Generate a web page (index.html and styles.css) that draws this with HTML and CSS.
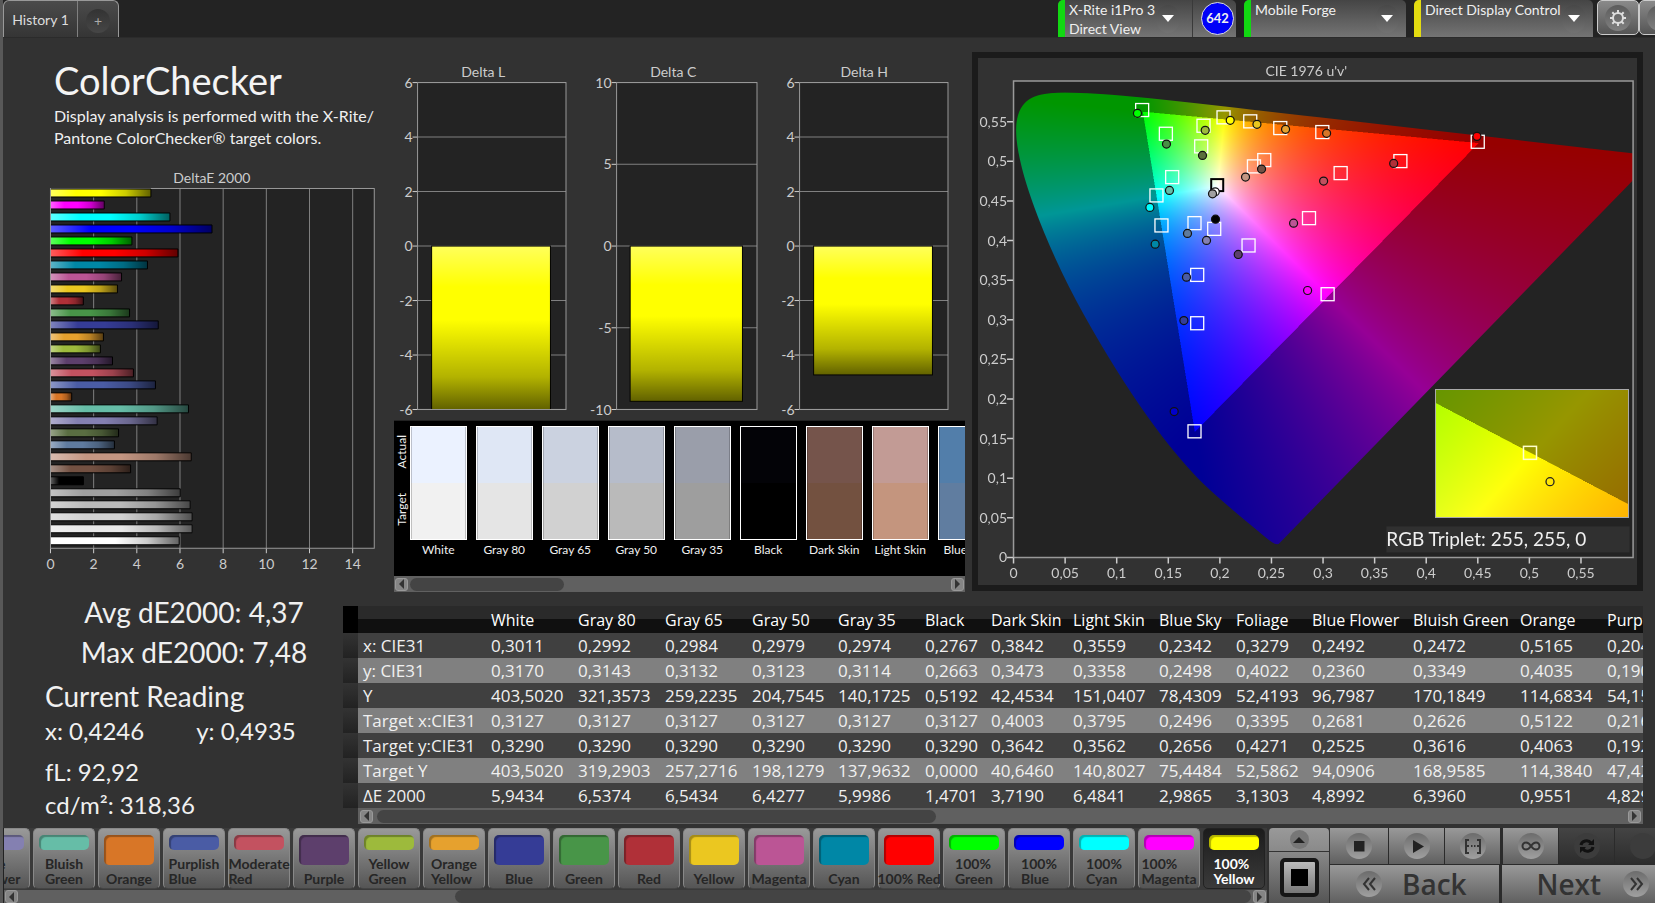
FILE: index.html
```html
<!DOCTYPE html>
<html lang="en">
<head>
<meta charset="utf-8">
<title>ColorChecker</title>
<link rel="stylesheet" href="styles.css">
</head>
<body>
<svg class="defs" aria-hidden="true">
  <defs>
    <linearGradient id="gloss-x" x1="0" x2="1" y1="0" y2="0">
      <stop offset="0" stop-color="#fff" stop-opacity=".36"/>
      <stop offset=".25" stop-color="#fff" stop-opacity="0"/>
      <stop offset=".5" stop-color="#000" stop-opacity="0"/>
      <stop offset=".75" stop-color="#000" stop-opacity=".2"/>
      <stop offset="1" stop-color="#000" stop-opacity=".62"/>
    </linearGradient>
    <linearGradient id="gloss-y" x1="0" x2="0" y1="0" y2="1">
      <stop offset="0" stop-color="#fff" stop-opacity=".36"/>
      <stop offset=".25" stop-color="#fff" stop-opacity="0"/>
      <stop offset=".45" stop-color="#000" stop-opacity="0"/>
      <stop offset=".8" stop-color="#000" stop-opacity=".3"/>
      <stop offset="1" stop-color="#000" stop-opacity=".62"/>
    </linearGradient>
  </defs>
</svg>
<div class="app">
  <header class="topbar">
    <nav class="tabs">
      <button class="tab-name">History 1</button>
      <button class="tab-add" aria-label="Add tab"><span>+</span></button>
    </nav>
    <div class="devices">
      <button class="device meter green"><span class="device-text">X-Rite i1Pro 3<br>Direct View</span><i class="drop"></i><span class="split"></span><b class="badge">642</b></button>
      <button class="device source green"><span class="device-text">Mobile Forge</span><i class="drop"></i></button>
      <button class="device display yellow"><span class="device-text">Direct Display Control</span><i class="drop"></i></button>
      <button class="tool" aria-label="Settings">
        <span class="disc"><svg width="18" height="18" viewBox="0 0 18 18"><circle cx="9" cy="9" r="5" fill="none" stroke="#ddd" stroke-width="2"/><g stroke="#ddd" stroke-width="2"><path d="M9 1v3M9 14v3M1 9h3M14 9h3M3.3 3.3l2.2 2.2M12.500 12.500l2.200 2.200M14.700 3.300l-2.200 2.200M5.500 12.500l-2.200 2.200"/></g></svg></span>
      </button>
      <button class="tool" aria-label="Help"><span class="disc"><svg width="18" height="18" viewBox="0 0 18 18"><path d="M4 9l5-4v8z" fill="#ddd"/></svg></span></button>
    </div>
  </header>

  <main class="work">
    <section class="upper">
      <div class="intro">
        <h1>ColorChecker</h1>
        <p>Display analysis is performed with the X-Rite/<br>Pantone ColorChecker® target colors.</p>
        <svg id="de" class="chart" viewBox="0 0 390 404" role="img" aria-label="DeltaE 2000"></svg>
      </div>
      <div class="middle">
        <div class="deltas" id="deltas"></div>
        <div class="patches">
          <div class="patch-view">
            <div class="patch-side"><span>Actual</span><span>Target</span></div>
            <div class="patch-list" id="patches"></div>
          </div>
          <div class="scroll patch-scroll"><button class="arrow left" aria-label="Scroll left"></button><div class="track"><div class="thumb"></div></div><button class="arrow right" aria-label="Scroll right"></button></div>
        </div>
      </div>
      <div class="cie">
        <canvas id="gamut" width="1238" height="952"></canvas>
        <canvas id="inset" width="384" height="252"></canvas>
        <svg id="cie" class="chart" viewBox="0 0 658 527" role="img" aria-label="CIE 1976 u'v'"></svg>
      </div>
    </section>

    <section class="lower">
      <div class="stats">
        <p class="total">Avg dE2000: 4,37</p>
        <p class="total">Max dE2000: 7,48</p>
        <h2>Current Reading</h2>
        <p class="pair"><span>x: 0,4246</span><span>y: 0,4935</span></p>
        <p class="lum">fL: 92,92</p>
        <p class="lum">cd/m²: 318,36</p>
      </div>
      <div class="data">
        <div class="data-view"><table id="table"></table></div>
        <div class="scroll data-scroll"><button class="arrow left" aria-label="Scroll left"></button><div class="track"><div class="thumb"></div></div><button class="arrow right" aria-label="Scroll right"></button></div>
      </div>
    </section>
  </main>

  <footer class="bottom">
    <div class="strip">
      <div class="strip-list" id="strip"></div>
      <div class="scroll strip-scroll"><button class="arrow left" aria-label="Scroll left"></button><div class="track"><div class="thumb"></div></div><button class="arrow right" aria-label="Scroll right"></button></div>
    </div>
    <div class="window-tools">
      <button class="up" aria-label="Expand"><span class="disc small"><svg width="12" height="8" viewBox="0 0 12 8"><path d="M0 7l6-6 6 6z" fill="#222"/></svg></span></button>
      <button class="frame" aria-label="Pattern window"><span class="frame-box"></span></button>
    </div>
    <div class="controls">
      <div class="control-row">
        <button aria-label="Stop"><span class="disc"><svg width="26" height="26" viewBox="0 0 26 26"><path d="M8 8h10.500v10.500H8z" fill="#222"/></svg></span></button>
        <button aria-label="Play"><span class="disc"><svg width="26" height="26" viewBox="0 0 26 26"><path d="M9 7l11 6.500L9 20z" fill="#222"/></svg></span></button>
        <button aria-label="Range"><span class="disc"><svg width="26" height="26" viewBox="0 0 26 26"><path d="M9 7H6v13h3M17 7h3v13h-3" fill="none" stroke="#333" stroke-width="2"/><path d="M6 13h3M11 13h1.500M14 13h1.500M17 13h3" stroke="#333" stroke-width="2"/></svg></span></button>
        <button class="loop" aria-label="Continuous"><span class="disc"><svg width="26" height="26" viewBox="0 0 26 26"><path d="M13 13c-2-3-3.500-3.500-5-3.500a3.500 3.500 0 0 0 0 7c1.500 0 3-.5 5-3.500s3.500-3.500 5-3.500a3.500 3.500 0 0 1 0 7c-1.500 0-3-.5-5-3.500z" fill="none" stroke="#333" stroke-width="2"/></svg></span></button>
        <button class="off" aria-label="Refresh"><span class="disc"><svg width="26" height="26" viewBox="0 0 26 26"><path d="M7 12c.5-4 7-6 10-2M19 14c-.5 4-7 6-10 2" fill="none" stroke="#111" stroke-width="3"/><path d="M20 6v6h-6zM6 20v-6h6z" fill="#111"/></svg></span></button>
        <button class="off" aria-label="Record"><span class="disc"></span></button>
      </div>
      <div class="control-row steps">
        <button class="back"><span class="disc"><svg width="26" height="26" viewBox="0 0 26 26"><path d="M13 7l-5 6 5 6M19 7l-5 6 5 6" fill="none" stroke="#333" stroke-width="2"/></svg></span>Back</button>
        <button class="next">Next<span class="disc"><svg width="26" height="26" viewBox="0 0 26 26"><path d="M8 7l5 6-5 6M14 7l5 6-5 6" fill="none" stroke="#333" stroke-width="2"/></svg></span></button>
      </div>
    </div>
  </footer>
</div>
<script src="app.js"></script>
</body>
</html>
```
FILE: styles.css
```css
* { box-sizing: border-box; }
body { margin: 0; background: #323232; color: #f0f0f0; font-family: Lato, "Open Sans", sans-serif; overflow: hidden; }
button { font: inherit; color: inherit; border: 0; padding: 0; margin: 0; background: none; }
h1, h2, p { margin: 0; font-weight: 400; }
.defs { position: absolute; width: 0; height: 0; }
.app { min-height: 100vh; display: flex; flex-direction: column; border-left: 3px solid #585858; }

/* top bar */
.topbar { display: flex; justify-content: space-between; height: 38px; background: #232323; border-bottom: 1px solid #2b2b2b; }
.tabs { display: flex; height: 37px; border: 1px solid #999; border-bottom: 0; border-radius: 6px 6px 0 0; background: linear-gradient(#4b4b4b, #353535); }
.tab-name { width: 73px; font-size: 14px; color: #ddd; }
.tab-add { width: 41px; border-left: 1px solid #808080; display: grid; place-items: center; }
.tab-add span { width: 24px; height: 24px; margin-top: 4px; border-radius: 50%; background: linear-gradient(#333, #464646); color: #aaa; font-size: 14px; line-height: 24px; }
.devices { display: flex; height: 37px; margin-right: -26px; }
.device { display: flex; align-items: center; height: 37px; border-radius: 5px 5px 0 0; background: linear-gradient(#454545, #747474); text-align: left; font-size: 14px; line-height: 19px; overflow: hidden; }
.device::before { content: ""; align-self: stretch; width: 7px; margin-right: 4px; background: #12d812; }
.device.yellow::before { background: #e4dc10; }
.device-text { flex: 1; align-self: flex-start; white-space: nowrap; }
.meter { width: 178px; margin-right: 8px; }
.source { width: 162px; margin-right: 8px; }
.display { width: 179px; margin-right: 4px; }
.drop { width: 24px; height: 28px; border-radius: 50%; background: linear-gradient(#484848, #727272); display: grid; place-items: center; margin-right: 7px; }
.meter .drop { margin-right: 12px; }
.drop::after { content: ""; border: 6px solid transparent; border-top: 7px solid #fff; border-bottom: 0; }
.split { width: 1px; height: 37px; background: #3a3a3a; }
.badge { width: 33px; height: 33px; margin: 0 2px 0 8px; border: 1px solid #ddd; border-radius: 50%; background: #0000f8; font-size: 13px; line-height: 31px; text-align: center; font-weight: 700; }
.tool { width: 42px; height: 35px; border: 1px solid #ccc; border-radius: 5px; background: linear-gradient(#8a8a8a, #555); display: grid; place-items: center; }
.disc { width: 26px; height: 26px; border-radius: 50%; display: grid; place-items: center; background: linear-gradient(#6c6c6c, #a0a0a0); }
.tool .disc { background: linear-gradient(#5c5c5c, #808080); }

/* upper area */
.work { flex: 1; padding: 14px 12px 0 1px; display: flex; flex-direction: column; }
.upper { display: grid; grid-template-columns: minmax(0, 390fr) minmax(0, 572fr) minmax(0, 678fr); }
.chart { display: block; width: 100%; overflow: visible; }
.chart text { font-family: Lato, sans-serif; font-size: 14px; fill: #ccc; }
.intro h1 { font-size: 38px; line-height: 44px; margin: 6px 0 0 50px; color: #f4f4f4; }
.intro p { font-size: 16px; line-height: 22px; margin: 3px 0 0 50px; white-space: nowrap; }
.intro .chart { margin-top: 23px; }
.middle { display: flex; flex-direction: column; }
.deltas { display: grid; grid-template-columns: repeat(3, 1fr); height: 368px; }
.patches { background: #000; border-top: 1px solid #222; }
.patch-view { display: flex; height: 155px; overflow: hidden; }
.patch-side { flex: none; width: 16px; padding: 6px 0 0; display: grid; grid-template-rows: 50px 64px; place-items: center; font-size: 12px; }
.patch-side span { writing-mode: vertical-rl; transform: rotate(180deg); }
.patch-list { display: flex; gap: 9px; padding-top: 5px; min-width: 0; overflow: hidden; }
.patch { flex: none; width: 57px; font-size: 12px; text-align: center; white-space: nowrap; }
.patch-pair { height: 114px; border: 1px solid #fff; display: grid; grid-template-rows: 1fr 1fr; }
.patch-pair i { box-shadow: inset 1px 0 rgba(0,0,0,.2), inset -1px 0 rgba(0,0,0,.2); }
.patch-name { display: block; line-height: 20px; }
.cie { display: grid; margin-left: 7px; border: 6px solid #1b1b1b; background: #323232; align-self: start; }
.cie > * { grid-area: 1 / 1; }
#gamut { width: 94.07%; margin: 3.5% 0 0 5.39%; background: #232323; }
#inset { width: 29.2%; margin: 50.46% 0 0 69.45%; outline: 1px solid #aaa; }
#cie .read { font-size: 19px; fill: #f0f0f0; }

/* scroll bars */
.scroll { display: flex; align-items: center; gap: 2px; height: 16px; background: #606060; padding: 0 1px; }
.arrow { width: 13px; height: 13px; border-radius: 3px; background: #858585; border: 1px solid #999; display: grid; place-items: center; }
.arrow::after { content: ""; border: 5px solid transparent; }
.arrow.left::after { border-right-color: #333; border-left: 0; }
.arrow.right::after { border-left-color: #333; border-right: 0; }
.track { flex: 1; height: 13px; }
.thumb { height: 100%; border-radius: 7px; background: #444; }
.patch-scroll .thumb { width: 28.5%; }
.data-scroll { margin-left: 15px; padding: 0 2px; gap: 4px; }
.data-scroll .thumb { width: 44.8%; }
.strip-scroll { height: 13px; }
.strip-scroll .thumb { width: 64.7%; margin-left: 35.3%; }

/* lower area */
.lower { display: grid; grid-template-columns: 339fr 1300fr; margin-top: 14px; }
.stats { padding-left: 41px; font-size: 24px; white-space: nowrap; }
.total { font-size: 28px; line-height: 40px; text-align: center; }
.total:first-child { margin-top: -14px; }
.stats h2 { font-size: 28px; line-height: 32px; margin-top: 8px; }
.pair { display: flex; gap: 52px; line-height: 38px; }
.lum { line-height: 33px; }
.pair + .lum { margin-top: 5px; }
.data { min-width: 0; }
.data-view { overflow: hidden; }
table { table-layout: fixed; border-collapse: collapse; width: 1364px; font-family: "Open Sans", "Noto Sans", sans-serif; font-size: 17px; }
th, td { height: 25px; padding: 0 0 0 5px; line-height: 24px; font-weight: 400; text-align: left; white-space: nowrap; overflow: hidden; }
thead th { height: 27px; font-size: 16px; background: linear-gradient(#2a2a2a 0 50%, #101010 50%); color: #fff; }
thead th:first-child { background: #000; }
tbody tr { background: #404040; }
tbody tr:nth-child(even) { background: #808080; }
tbody td:first-child { background: linear-gradient(#333, #222); }

/* bottom bar */
.bottom { display: flex; height: 75px; background: #323232; }
.strip { flex: 1; min-width: 0; overflow: hidden; background: #3a3a3a; border-left: 1px solid #222; }
.strip-list { display: flex; gap: 3px; margin-left: -36px; height: 62px; }
.swatch { flex: none; width: 62px; height: 61px; padding: 6px 0 0; border-radius: 5px; background: linear-gradient(#999, #555); border: 1px solid #888; border-bottom-color: #444; display: flex; flex-direction: column; align-items: center; justify-content: space-between; color: #262626; font-size: 14px; line-height: 15px; font-weight: 700; text-align: left; white-space: nowrap; }
.swatch i { flex: none; width: 50px; height: 30px; border-radius: 5px; box-shadow: inset 2px 2px 1px rgba(0,0,0,.3); }
.swatch.two i { height: 15px; }
.swatch span { padding-bottom: 2px; }
.swatch.on { background: linear-gradient(#1c1c1c, #3a3a3a); border-color: #222; color: #fff; }
.window-tools { width: 60px; display: grid; grid-template-rows: 23px 1fr; gap: 1px; margin: 0 1px 0 2px; background: #333; }
.window-tools button { display: grid; place-items: center; background: linear-gradient(#999, #8a8a8a); border-radius: 4px 4px 0 0; }
.window-tools .frame { background: linear-gradient(#888, #555); border-radius: 0; }
.disc.small { width: 19px; height: 19px; background: #777; }
.frame-box { width: 39px; height: 39px; border: 4px solid #161616; border-radius: 5px; background: linear-gradient(#bbb, #777); display: grid; place-items: center; }
.frame-box::after { content: ""; width: 17px; height: 17px; background: #000; }
.controls { width: 325px; overflow: hidden; display: flex; flex-direction: column; gap: 1px; background: #2b2b2b; }
.control-row { display: flex; gap: 1px; width: 342px; height: 38px; }
.control-row button { width: 55px; display: grid; place-items: center; background: linear-gradient(#999, #606060); }
.control-row button:first-child { width: 58px; }
.control-row .loop { margin-left: 2px; }
.control-row .off { background: linear-gradient(#444, #2c2c2c); }
.control-row .off .disc { background: #3c3c3c; }
.steps button, .steps button:first-child { width: 170px; display: flex; align-items: center; gap: 20px; font: 600 28px "Open Sans", sans-serif; color: #333; padding-left: 26px; }
.steps .next { margin-left: 2px; padding-left: 34px; gap: 22px; }
```
FILE: app.js
```js
const $ = id => document.getElementById(id);

/* DeltaE 2000 bars, top to bottom: colour and value */
const dE = [
  ['#ffff00', 4.63], ['#ff00ff', 2.47], ['#00ffff', 5.51], ['#0000ff', 7.46], ['#00ff00', 3.75], ['#ff0000', 5.88],
  ['#0087a6', 4.47], ['#bb5595', 3.27], ['#ebc720', 3.08], ['#b03038', 1.5], ['#489548', 3.64], ['#353c96', 4.97],
  ['#e6a12e', 2.43], ['#9dba3c', 2.29], ['#5d3f6c', 2.85], ['#c35260', 3.82], ['#4a5ca5', 4.84], ['#d87627', .96],
  ['#66bda7', 6.37], ['#8480b1', 4.92], ['#5a6e42', 3.13], ['#5f7b9f', 2.94], ['#c49682', 6.5], ['#735142', 3.69],
  ['#000000', 1.5], ['#a0a0a0', 5.99], ['#bababa', 6.45], ['#d2d2d2', 6.54], ['#e8e8e8', 6.54], ['#ffffff', 5.94]];
{
  const X = v => 46.5 + v * 21.6, top = 16.5, bot = 376.5;
  let s = `<text x="208" y="11" text-anchor="middle">DeltaE 2000</text><rect x="${X(0)}" y="${top}" width="${X(15) - X(0)}" height="${bot - top}" fill="#232323"/>`;
  for (let v = 0; v <= 14; v += 2)
    s += `<path d="M${X(v)} ${top}V${bot}" stroke="#808080"/><path d="M${X(v)} ${bot}v5" stroke="#ccc"/><text x="${X(v)}" y="397" text-anchor="middle">${v}</text>`;
  s += `<rect x="${X(0)}" y="${top}" width="${X(15) - X(0)}" height="${bot - top}" fill="none" stroke="#999"/>`;
  dE.forEach(([c, v], i) => {
    const y = 17 + i * 12, w = v * 21.6;
    s += `<rect x="47" y="${y}" width="${w}" height="8" fill="${c}"/><rect x="47" y="${y}" width="${w}" height="8" fill="url(#gloss-x)"/><path d="M47 ${y}h${w}v8h-${w}" fill="none" stroke="#000"/>`;
  });
  $('de').innerHTML = s;
}

/* Delta L / C / H columns */
[['Delta L', 23.5, 171.5, 6, 2, -7, 37.5, 156, 89], ['Delta C', 32.5, 172.500, 10, 5, -9.5, 46, 158, 89], ['Delta H', 24.5, 172.5, 6, 2, -4.73, 38.500, 157, 89]].forEach(([name, l, r, max, step, val, b0, b1, tx]) => {
  const Y = v => 193.5 - v / max * 163;
  let s = `<text x="${tx}" y="25" text-anchor="middle">${name}</text><rect x="${l}" y="30.5" width="${r - l}" height="325" fill="#232323"/>`;
  for (let v = -max; v <= max; v += step)
    s += `<path d="M${l} ${Y(v)}H${r}" stroke="#808080"/><path d="M${l - 5} ${Y(v)}h5" stroke="#ccc"/><text x="${l - 5}" y="${Y(v) + 5}" text-anchor="end">${v}</text>`;
  const h = Math.min(-val / max * 163, 163);
  s += `<rect x="${b0}" y="193.5" width="${b1 - b0}" height="${h}" fill="#ff0"/><rect x="${b0}" y="193.5" width="${b1 - b0}" height="${h}" fill="url(#gloss-y)" stroke="#000"/>`;
  s += `<rect x="${l}" y="30.5" width="${r - l}" height="326" fill="none" stroke="#999"/>`;
  $('deltas').insertAdjacentHTML('beforeend', `<svg class="chart" viewBox="0 0 190 368" role="img" aria-label="${name}">${s}</svg>`);
});

/* actual / target patches */
[['White', '#ebf2ff', '#f1f1f1'], ['Gray 80', '#dfe7f5', '#e5e5e5'], ['Gray 65', '#cbd2e0', '#d1d1d1'], ['Gray 50', '#b6bcca', '#bababa'],
 ['Gray 35', '#9a9eaa', '#9e9e9e'], ['Black', '#030307', '#000'], ['Dark Skin', '#75544b', '#735140'], ['Light Skin', '#c29b95', '#c4957e'],
 ['Blue Sky', '#527eaa', '#607da0']].forEach(([n, a, t]) => {
  $('patches').insertAdjacentHTML('beforeend', `<div class="patch"><div class="patch-pair"><i style="background:${a}"></i><i style="background:${t}"></i></div><span class="patch-name">${n}</span></div>`);
});

/* chromaticity colours, normalised to the strongest channel */
function rgbAt(x, y) {
  const X = x / y, Z = (1 - x - y) / y;
  const r = 3.2406 * X - 1.5372 - .4986 * Z, g = -.9689 * X + 1.8758 + .0415 * Z, b = .0557 * X - .204 + 1.057 * Z;
  const m = Math.max(r, g, b), k = (r < 0 || g < 0 || b < 0) ? .59 : 1;
  return [r, g, b].map(c => 255 * k * Math.max(0, c / m));
}
const locus = [.1741,.005,.1733,.0048,.1714,.0051,.1689,.0069,.1644,.0109,.1566,.0177,.144,.0297,.1355,.0399,.1241,.0578,.1096,.0868,.0913,.1327,.0687,.2007,.0454,.295,.0235,.4127,.0082,.5384,.0039,.6548,.0139,.7502,.0389,.812,.0743,.8338,.1142,.8262,.1547,.8059,.2296,.7543,.3016,.6923,.3731,.6245,.4441,.5547,.5125,.4866,.5752,.4242,.627,.3725,.6658,.334,.6915,.3083,.719,.2809,.7347,.2653];

function paint(cv, toXY) {
  const g = cv.getContext('2d'), w = cv.width, h = cv.height, im = g.createImageData(w, h);
  for (let j = 0; j < h; j++) for (let i = 0; i < w; i++) {
    const c = rgbAt(...toXY((i + .5) / w, (j + .5) / h)), o = (j * w + i) * 4;
    im.data[o] = c[0]; im.data[o + 1] = c[1]; im.data[o + 2] = c[2]; im.data[o + 3] = 255;
  }
  g.putImageData(im, 0, 0);
}
const U = .6005, V = .6013;
paint($('gamut'), (a, b) => {
  const u = a * U, v = (1 - b) * V, d = 6 * u - 16 * v + 12;
  return [9 * u / d, 4 * v / d];
});
{
  const cv = $('gamut'), g = cv.getContext('2d'), p = [];
  for (let i = 0; i < locus.length; i += 2) {
    const x = locus[i], y = locus[i + 1], d = -2 * x + 12 * y + 3;
    p.push([4 * x / d / U * cv.width, (1 - 9 * y / d / V) * cv.height]);
  }
  g.globalCompositeOperation = 'destination-in';
  g.beginPath();
  g.moveTo(...p[0]);
  for (let i = 1; i < p.length - 1; i++)
    g.quadraticCurveTo(...p[i], (p[i][0] + p[i + 1][0]) / 2, (p[i][1] + p[i + 1][1]) / 2);
  g.lineTo(...p[p.length - 1]);
  g.fill();
}
paint($('inset'), (a, b) => [.4193 + (a - .5) * .0515, .5053 - (b - .5) * .0515]);

/* chromaticity axes and markers */
const targets = [[164,52],[187.700,75.700],[225.300,67.700],[223,88.300],[245.300,59.300],[272,63.300],[302,70],[344,74],[286,102],[275.700,108.300],[362.300,115],[194,119],[178.300,137.300],[183.300,167.300],[216.300,165],[236,170.700],[330.700,160],[270.300,187.300],[219,216.700],[349.300,236],[499.300,83.700],[422,103],[219,265],[216.300,373]];
const reads = [[159.300,55.300,'#0f0'],[188.300,86,'#489044'],[227,72.300,'#9dba3c'],[224.300,97.300,'#5a6e3c'],[252,62.300,'#ff0'],[278.700,66.300,'#e9c71f'],[307.300,71.300,'#e6a12e'],[348.300,75.300,'#d87627'],[283.300,111,'#735144'],[267.300,119,'#c49682'],[345.300,123,'#c1505e'],[191.300,132.300,'#64bea8'],[171.700,149.300,'#0ff'],[177,186,'#0087a6'],[209.300,175.300,'#5f7b9c'],[228.300,182.300,'#8480b1'],[315.300,165,'#bb5595'],[260,196.300,'#5d3f6c'],[208.300,219,'#4a5ca5'],[329.300,232.300,'#f0f'],[237,133.700,'#fff'],[234.300,135.700,'#a0a0a0'],[237.300,161,'#000'],[498.500,78.300,'#f00'],[415.300,105.300,'#b03038'],[205.700,262.300,'#343e98'],[196,353.300,'#00c']];
{
  const f = v => String(+v.toFixed(2)).replace('.', ',');
  let s = `<text x="328" y="18" text-anchor="middle">CIE 1976 u'v'</text><path d="M35.500 23h619v476h-619z" fill="none" stroke="#999" stroke-width="1.500"/>`;
  for (let i = 0; i < 12; i++) {
    const x = 35.5 + i * 51.54, y = 499 - i * 39.58;
    s += `<path d="M${x} 499v6M35 ${y}h-6" stroke="#ccc" stroke-width="1.500"/><text x="${x}" y="520" text-anchor="middle">${f(i * .05)}</text><text x="29" y="${y + 5}" text-anchor="end">${f(i * .05)}</text>`;
  }
  s += targets.map(([x, y]) => `<rect x="${x - 6.5}" y="${y - 6.5}" width="13" height="13" fill="none" stroke="#fff" stroke-width="1.300"/>`).join('');
  s += '<rect x="233" y="121" width="12" height="12" fill="none" stroke="#000" stroke-width="2"/>';
  s += reads.map(([x, y, c]) => `<circle cx="${x}" cy="${y}" r="4" fill="${c}" stroke="#111" stroke-width="1.200"/>`).join('');
  s += '<rect x="545" y="388" width="13" height="13" fill="none" stroke="#ffc" stroke-width="1.500"/><circle cx="571.500" cy="423.300" r="4" fill="none" stroke="#222" stroke-width="1.300"/>';
  s += '<rect x="408" y="468" width="243" height="26" fill="#303030"/><text class="read" x="408" y="488">RGB Triplet: 255, 255, 0</text>';
  $('cie').innerHTML = s;
}

/* measurement table */
const cols = [['', 15], ['', 128], ['White', 87], ['Gray 80', 87], ['Gray 65', 87], ['Gray 50', 86], ['Gray 35', 87], ['Black', 66], ['Dark Skin', 82], ['Light Skin', 86], ['Blue Sky', 77], ['Foliage', 76], ['Blue Flower', 101], ['Bluish Green', 107], ['Orange', 87], ['Purplish Blue', 105]];
const rows = [
  ['x: CIE31', '0,3011 0,2992 0,2984 0,2979 0,2974 0,2767 0,3842 0,3559 0,2342 0,3279 0,2492 0,2472 0,5165 0,2042'],
  ['y: CIE31', '0,3170 0,3143 0,3132 0,3123 0,3114 0,2663 0,3473 0,3358 0,2498 0,4022 0,2360 0,3349 0,4035 0,1903'],
  ['Y', '403,5020 321,3573 259,2235 204,7545 140,1725 0,5192 42,4534 151,0407 78,4309 52,4193 96,7987 170,1849 114,6834 54,1520'],
  ['Target x:CIE31', '0,3127 0,3127 0,3127 0,3127 0,3127 0,3127 0,4003 0,3795 0,2496 0,3395 0,2681 0,2626 0,5122 0,2160'],
  ['Target y:CIE31', '0,3290 0,3290 0,3290 0,3290 0,3290 0,3290 0,3642 0,3562 0,2656 0,4271 0,2525 0,3616 0,4063 0,1920'],
  ['Target Y', '403,5020 319,2903 257,2716 198,1279 137,9632 0,0000 40,6460 140,8027 75,4484 52,5862 94,0906 168,9585 114,3840 47,4230'],
  ['ΔE 2000', '5,9434 6,5374 6,5434 6,4277 5,9986 1,4701 3,7190 6,4841 2,9865 3,1303 4,8992 6,3960 0,9551 4,8290']];
$('table').innerHTML = '<colgroup>' + cols.map(c => `<col style="width:${c[1]}px">`).join('') + '</colgroup><thead><tr>' +
  cols.map(c => `<th>${c[0]}</th>`).join('') + '</tr></thead><tbody>' +
  rows.map(([name, values]) => `<tr><td></td><td>${name}</td>` + values.split(' ').map(c => `<td>${c}</td>`).join('') + '</tr>').join('') + '</tbody>';

/* colour buttons */
[['Blue<br>Flower', '#8480b1'], ['Bluish<br>Green', '#66bda7'], ['Orange', '#d87627'], ['Purplish<br>Blue', '#4a5ca5'], ['Moderate<br>Red', '#c35260'],
 ['Purple', '#5d3f6c'], ['Yellow<br>Green', '#9dba3c'], ['Orange<br>Yellow', '#e6a12e'], ['Blue', '#353c96'], ['Green', '#489548'], ['Red', '#b03038'],
 ['Yellow', '#ebc720'], ['Magenta', '#bb5595'], ['Cyan', '#0087a6'], ['100% Red', '#f00'], ['100%<br>Green', '#0f0'], ['100%<br>Blue', '#00f'],
 ['100%<br>Cyan', '#0ff'], ['100%<br>Magenta', '#f0f'], ['100%<br>Yellow', '#ff0']].forEach(([n, c], i, all) => {
  $('strip').insertAdjacentHTML('beforeend', `<button class="swatch${n.includes('<') ? ' two' : ''}${i === all.length - 1 ? ' on' : ''}"><i style="background:${c}"></i><span>${n}</span></button>`);
});
```
